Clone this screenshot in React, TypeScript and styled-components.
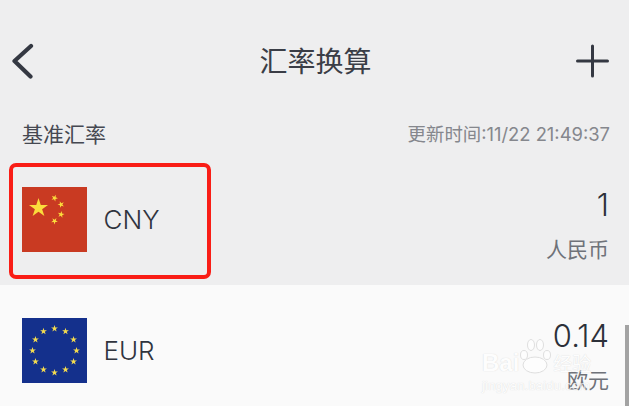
import React from 'react'
import styled, { createGlobalStyle } from 'styled-components'

const GlobalStyle = createGlobalStyle`
    html, body {
        margin: 0;
        padding: 0;
        background: #eeeeef;
    }
`

const FONT = `Inter, "Noto Sans CJK SC", sans-serif`

const Screen = styled.div`
    width: 629px;
    height: 406px;
    overflow: hidden;
    position: relative;
    background: #eeeeef;
    font-family: ${FONT};
    color: #343842;
`

const Header = styled.header`
    height: 122px;
    display: flex;
    align-items: center;
    padding: 0 19px 0 10px;
    box-sizing: border-box;
`

const IconButton = styled.div`
    width: 36px;
    height: 36px;
    flex-shrink: 0;
    display: flex;
    align-items: center;
    justify-content: center;
`

const Title = styled.h1`
    flex: 1;
    margin: 2px 0 0 0;
    padding-left: 11px;
    text-align: center;
    font-size: 28px;
    font-weight: 400;
    line-height: 36px;
    color: #3a3d46;
`

const SectionBar = styled.div`
    height: 22px;
    padding: 0 19px 2px 22px;
    display: flex;
    align-items: center;
    justify-content: space-between;
    margin-bottom: 8px;
`

const SectionLabel = styled.span`
    font-size: 21px;
    color: #454851;
`

const UpdatedAt = styled.span`
    font-size: 18.4px;
    color: #85878d;
`

const Row = styled.div<{ $light?: boolean }>`
    height: 131px;
    flex-shrink: 0;
    padding: 0 20px 0 22px;
    display: flex;
    align-items: center;
    box-sizing: border-box;
    background: ${(p) => (p.$light ? '#fafafa' : '#eeeeef')};
`

const Flag = styled.svg`
    width: 65px;
    height: 65px;
    display: block;
    flex-shrink: 0;
`

const Code = styled.span`
    margin-left: 16.5px;
    font-size: 26px;
    font-weight: 300;
    color: #30343e;
`

const Values = styled.div`
    margin-left: auto;
    padding-top: 12px;
    display: flex;
    flex-direction: column;
    align-items: flex-end;
    gap: 13px;
`

const Amount = styled.span`
    font-size: 31px;
    font-weight: 300;
    line-height: 36px;
    color: #2c3039;
`

const CurrencyName = styled.span`
    font-size: 21px;
    line-height: 28px;
    color: #6f7279;
`

const Highlight = styled.div`
    position: absolute;
    left: 9px;
    top: 163px;
    width: 202px;
    height: 116px;
    box-sizing: border-box;
    border: 4px solid #f91d16;
    border-radius: 7px;
`

const ScrollThumb = styled.div`
    position: absolute;
    right: 0;
    top: 325px;
    width: 4px;
    height: 81px;
    background: #a3a3a3;
`

const Watermark = styled.div`
    position: absolute;
    left: 482px;
    top: 338px;
    width: 112px;
    color: #fff;
    font-family: "Liberation Sans", sans-serif;
    opacity: 0.7;
    text-shadow: 0 0 1px #c4c4c4;
`

const MarkBrand = styled.div`
    display: flex;
    align-items: flex-end;
    height: 36px;
    font-size: 24px;
    line-height: 22px;
    font-weight: 700;
`

const MarkHan = styled.span`
    margin-left: 2px;
    font-family: "Noto Sans CJK SC", sans-serif;
    font-size: 19px;
    font-weight: 400;
`

const MarkSite = styled.div`
    font-size: 13px;
    line-height: 14px;
    letter-spacing: 0.2px;
    margin-top: 5px;
    white-space: nowrap;
`

const star = (cx: number, cy: number, r: number, rot = 0) => {
    const pts: string[] = []
    for (let i = 0; i < 10; i++) {
        const rad = i % 2 === 0 ? r : r * 0.382
        const a = (Math.PI / 5) * i - Math.PI / 2 + rot
        pts.push(`${(cx + rad * Math.cos(a)).toFixed(2)},${(cy + rad * Math.sin(a)).toFixed(2)}`)
    }
    return pts.join(' ')
}

const ChinaFlag = () => (
    <Flag viewBox="0 0 65 65">
        <rect width="65" height="65" fill="#c93a22" />
        <polygon points={star(16.5, 21, 10)} fill="#fbdc3c" />
        <polygon points={star(32.5, 11, 3.5, 0.4)} fill="#fbdc3c" />
        <polygon points={star(39, 17.5, 3.5, 0.9)} fill="#fbdc3c" />
        <polygon points={star(39, 27.5, 3.5, 0.2)} fill="#fbdc3c" />
        <polygon points={star(32.5, 34, 3.5, 0.6)} fill="#fbdc3c" />
    </Flag>
)

const EuFlag = () => (
    <Flag viewBox="0 0 65 65">
        <rect width="65" height="65" fill="#14308c" />
        {Array.from({ length: 12 }).map((_, i) => {
            const a = (Math.PI / 6) * i
            return (
                <polygon
                    key={i}
                    points={star(32.5 + 22 * Math.sin(a), 32.5 - 22 * Math.cos(a), 3.6)}
                    fill="#f5dc4e"
                />
            )
        })}
    </Flag>
)

const App = () => {
    return (
        <Screen>
            <GlobalStyle />
            <Header>
                <IconButton>
                    <svg width="36" height="36" viewBox="0 0 36 36" fill="none">
                        <path d="M21 3 L4.5 18 L20.5 33.5" stroke="#343842" strokeWidth="4.2" strokeLinecap="round" strokeLinejoin="round" />
                    </svg>
                </IconButton>
                <Title>汇率换算</Title>
                <IconButton>
                    <svg width="36" height="36" viewBox="0 0 36 36" fill="none">
                        <path d="M18.5 3 V33 M3.5 18 H33.5" stroke="#343842" strokeWidth="3" strokeLinecap="round" />
                    </svg>
                </IconButton>
            </Header>
            <SectionBar>
                <SectionLabel>基准汇率</SectionLabel>
                <UpdatedAt>更新时间:11/22 21:49:37</UpdatedAt>
            </SectionBar>
            <Row>
                <ChinaFlag />
                <Code>CNY</Code>
                <Values>
                    <Amount>1</Amount>
                    <CurrencyName>人民币</CurrencyName>
                </Values>
            </Row>
            <Row $light>
                <EuFlag />
                <Code>EUR</Code>
                <Values>
                    <Amount>0.14</Amount>
                    <CurrencyName>欧元</CurrencyName>
                </Values>
            </Row>
            <Highlight />
            <ScrollThumb />
            <Watermark>
                <MarkBrand>
                    Bai
                    <svg width="32" height="36" viewBox="0 0 32 36" fill="#fff" stroke="#d4d4d4" strokeWidth="1">
                        <ellipse cx="16" cy="27" rx="12" ry="8" />
                        <ellipse cx="5" cy="17" rx="3.5" ry="4.5" />
                        <ellipse cx="12" cy="7" rx="3.5" ry="5.5" />
                        <ellipse cx="21" cy="7" rx="3.5" ry="5.5" />
                        <ellipse cx="28" cy="17" rx="3.5" ry="4.5" />
                    </svg>
                    <MarkHan>经验</MarkHan>
                </MarkBrand>
                <MarkSite>jingyan.baidu.com</MarkSite>
            </Watermark>
        </Screen>
    )
}

export default App
